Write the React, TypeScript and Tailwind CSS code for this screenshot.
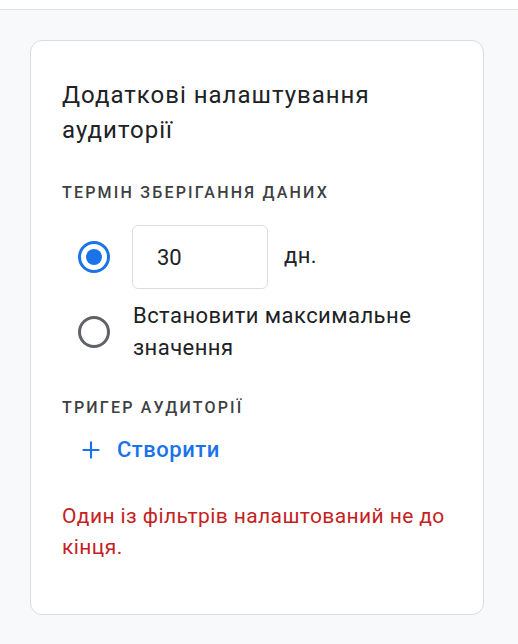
import { Plus } from "lucide-react";

function Radio({ checked }: { checked: boolean }) {
  return (
    <span
      className={
        "flex h-8 w-8 shrink-0 items-center justify-center rounded-full border-[3.5px] " +
        (checked ? "border-[#1a73e8]" : "border-[#5f6368]")
      }
    >
      {checked && <span className="h-4 w-4 rounded-full bg-[#1a73e8]" />}
    </span>
  );
}

export default function App() {
  return (
    <div className="min-h-[644px] bg-[#f8f9fa] font-['Roboto',sans-serif] text-[#202124]">
      <div className="h-[10px] border-b border-[#e0e0e0] bg-white" />
      <div className="pl-[30px] pr-[34px] pt-[30px] pb-[30px]">
        <div className="rounded-[12px] border border-[#dadce0] bg-white px-[31px] pt-[37px] pb-[51px]">
          <h2 className="text-[24px] leading-[35px] font-normal tracking-[1px] text-[#202124]">
            Додаткові налаштування аудиторії
          </h2>

          <div className="mt-[35px] text-[16px] leading-5 font-medium tracking-[2.2px] text-[#3c4043]">
            ТЕРМІН ЗБЕРІГАННЯ ДАНИХ
          </div>

          <div className="mt-[22px] flex items-center pl-4">
            <Radio checked />
            <div className="ml-[22px] flex h-16 w-[136px] items-center rounded-[6px] border border-[#dadce0] pl-6 text-[22px] text-[#202124]">
              30
            </div>
            <span className="ml-4 -mt-1 text-[22px] tracking-[0.4px] text-[#202124]">дн.</span>
          </div>

          <div className="mt-[11px] flex items-center pl-4">
            <Radio checked={false} />
            <span className="ml-[23px] text-[22px] leading-8 tracking-[0.45px] text-[#202124]">
              Встановити максимальне значення
            </span>
          </div>

          <div className="mt-[34px] text-[16px] leading-5 font-medium tracking-[2.2px] text-[#3c4043]">
            ТРИГЕР АУДИТОРІЇ
          </div>

          <button className="mt-[16px] flex items-center pl-4 text-[#1a73e8]">
            <Plus className="h-[26px] w-[26px]" strokeWidth={2} />
            <span className="ml-[13px] text-[22px] leading-8 font-medium tracking-[0.5px]">
              Створити
            </span>
          </button>

          <p className="mt-[35px] text-[21px] leading-[31px] tracking-[0.4px] text-[#c5221f]">
            Один із фільтрів налаштований не до кінця.
          </p>
        </div>
      </div>
    </div>
  );
}
